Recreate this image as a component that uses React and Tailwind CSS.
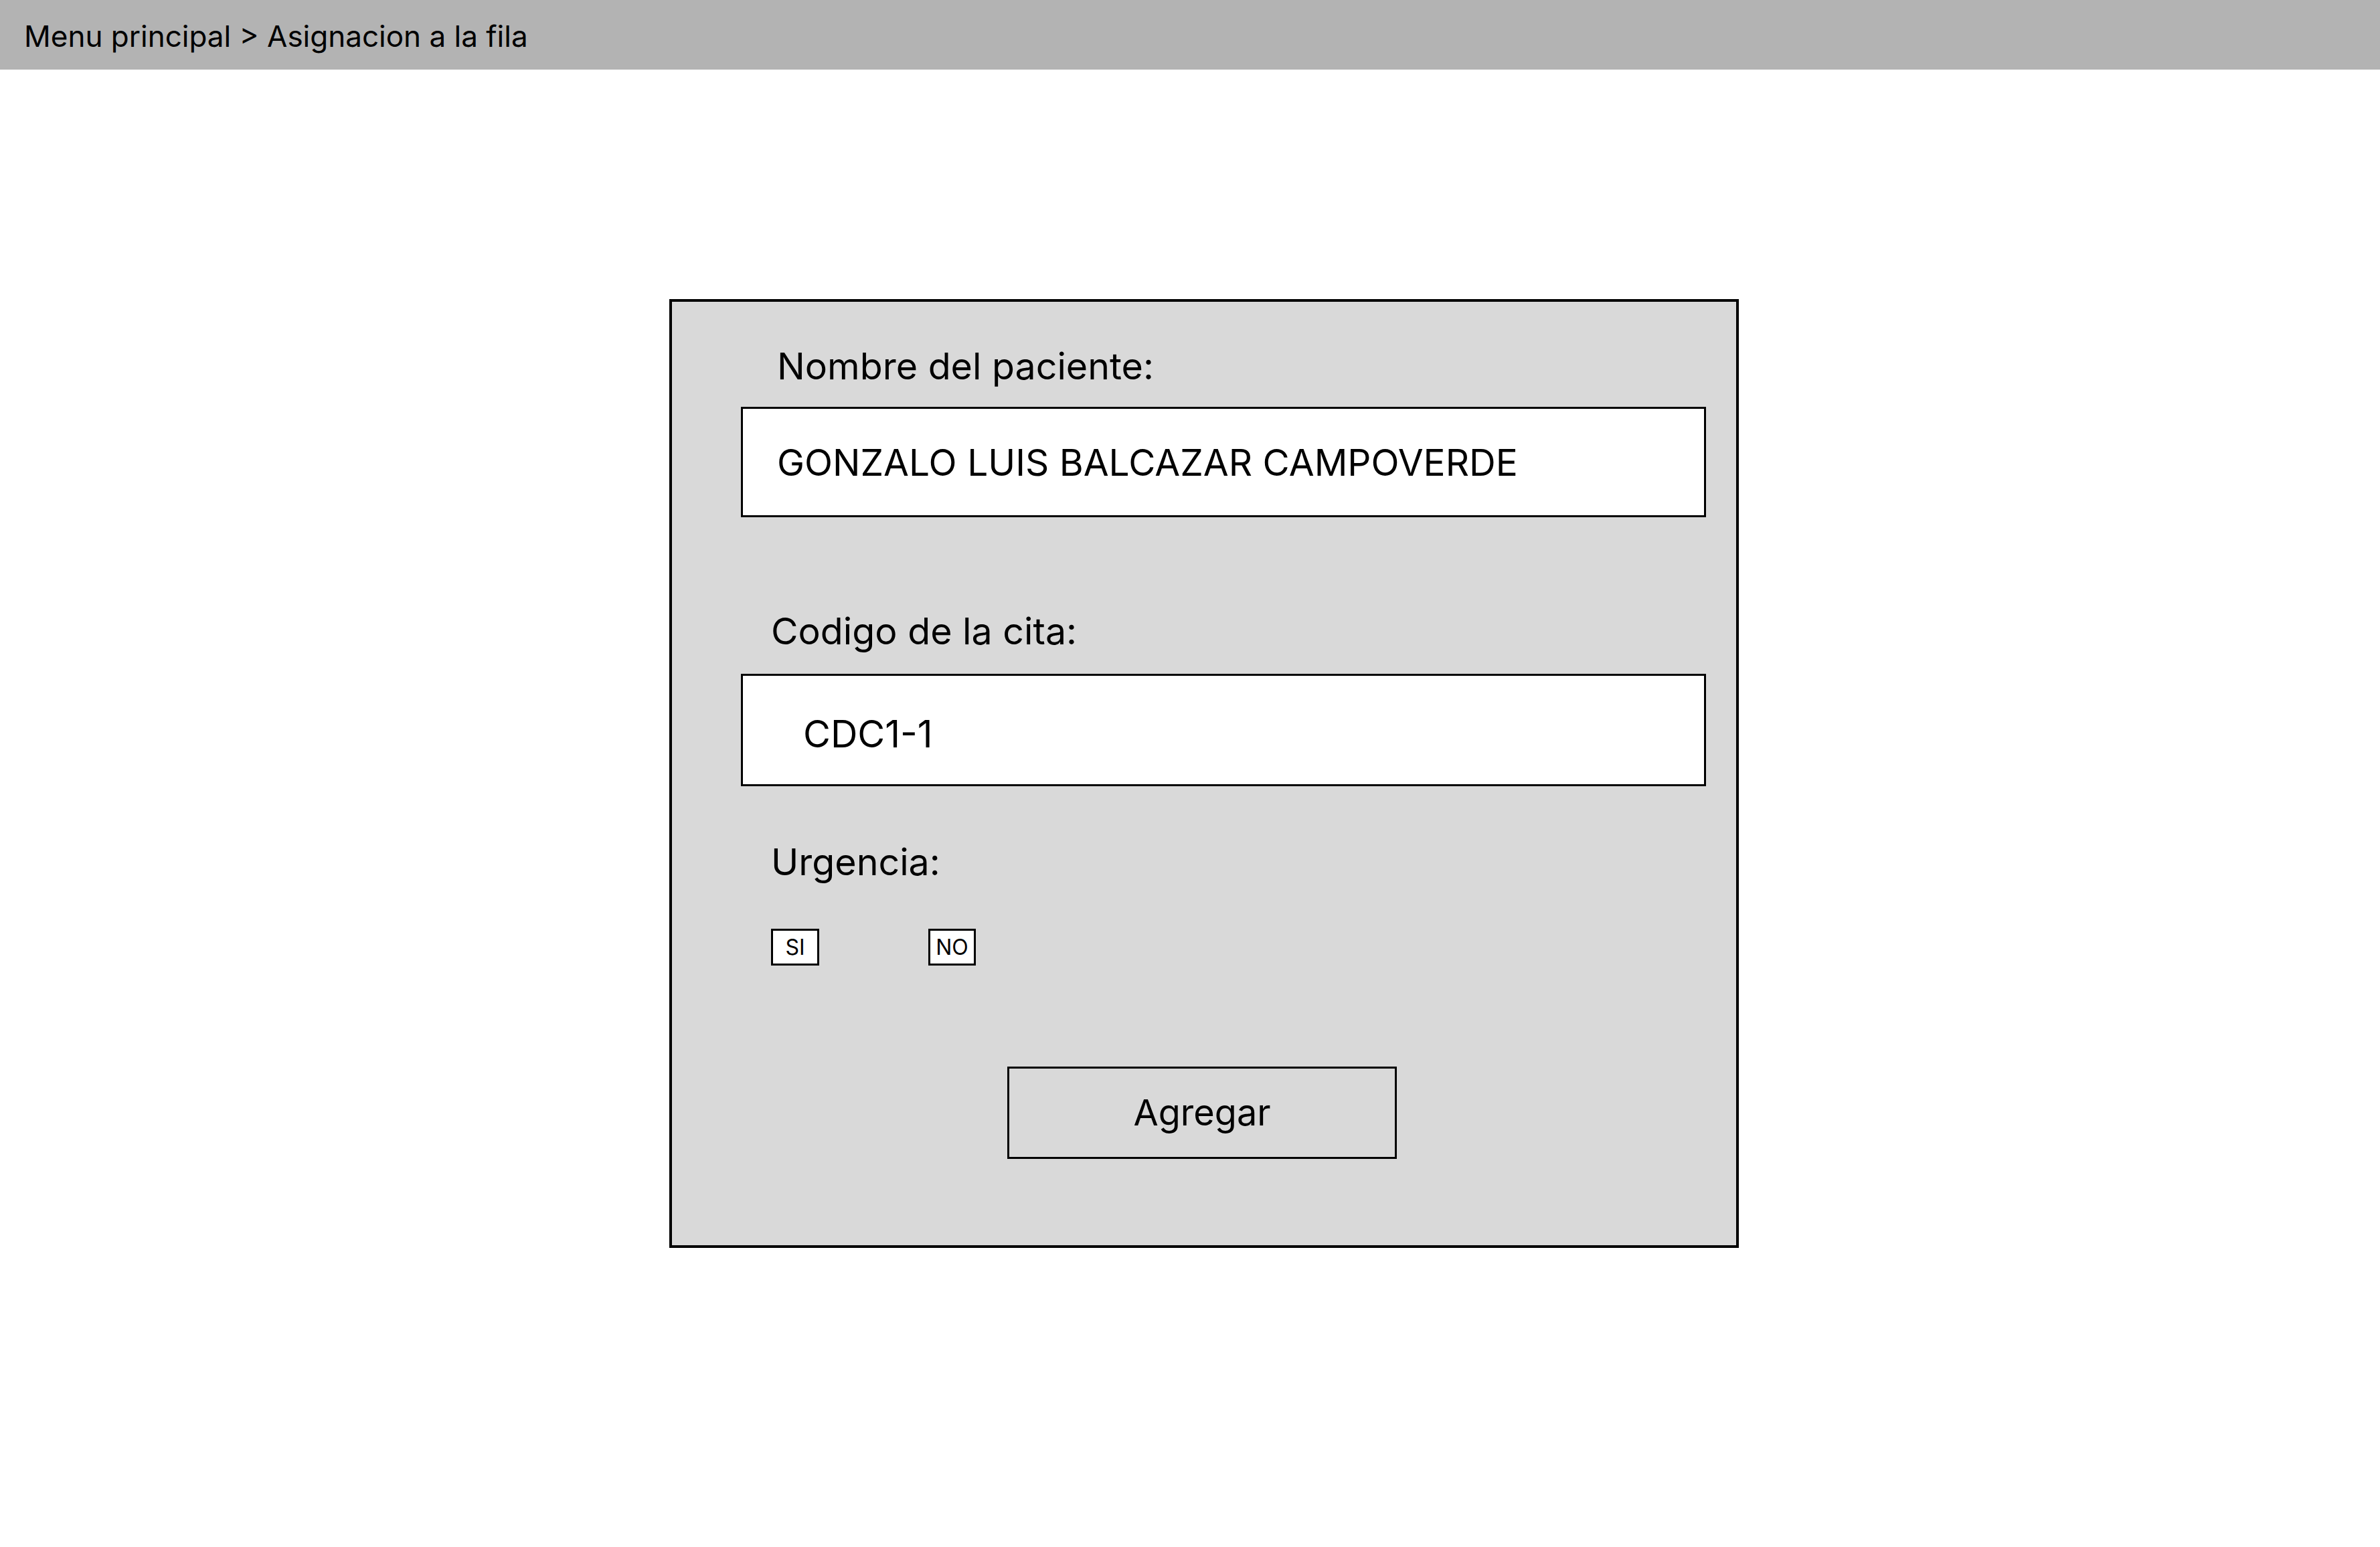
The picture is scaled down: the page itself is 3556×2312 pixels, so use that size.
export default function App() {
  return (
    <div className="min-h-screen w-[3556px] h-[2312px] bg-white font-['Inter',sans-serif] text-black">
      {/* Breadcrumb */}
      <div className="h-[104px] bg-[#b3b3b3] flex items-center pl-[36px] pt-[4px]">
        <p className="text-[44px] leading-none">Menu principal &gt; Asignacion a la fila</p>
      </div>

      {/* Form panel */}
      <div className="ml-[1000px] mt-[343px] w-[1598px] h-[1418px] bg-[#d9d9d9] border-4 border-black flex flex-col pt-[63px] pl-[103px]">
        <label className="text-[55.5px] leading-[66px] pl-[54px]">Nombre del paciente:</label>
        <div className="mt-[28px] w-[1442px] h-[165px] bg-white border-[3px] border-black flex items-center pl-[51px] pt-[2px]">
          <span className="text-[55px] leading-none">GONZALO LUIS BALCAZAR CAMPOVERDE</span>
        </div>

        <label className="mt-[137px] text-[55.5px] leading-[66px] pl-[45px]">Codigo de la cita:</label>
        <div className="mt-[31px] w-[1442px] h-[168px] bg-white border-[3px] border-black flex items-center pl-[90px] pt-[12px]">
          <span className="text-[56px] leading-none">CDC1-1</span>
        </div>

        <label className="mt-[80px] text-[55.5px] leading-[66px] pl-[45px]">Urgencia:</label>
        <div className="mt-[67px] pl-[45px] flex gap-[163px]">
          <button className="w-[72px] h-[55px] bg-white border-[3px] border-black flex items-center justify-center text-[32px] leading-none">
            SI
          </button>
          <button className="w-[71px] h-[55px] bg-white border-[3px] border-black flex items-center justify-center text-[32px] leading-none">
            NO
          </button>
        </div>

        <button className="mt-[151px] ml-[398px] w-[582px] h-[138px] border-[3px] border-black flex items-center justify-center text-[54px] leading-none">
          Agregar
        </button>
      </div>
    </div>
  )
}
